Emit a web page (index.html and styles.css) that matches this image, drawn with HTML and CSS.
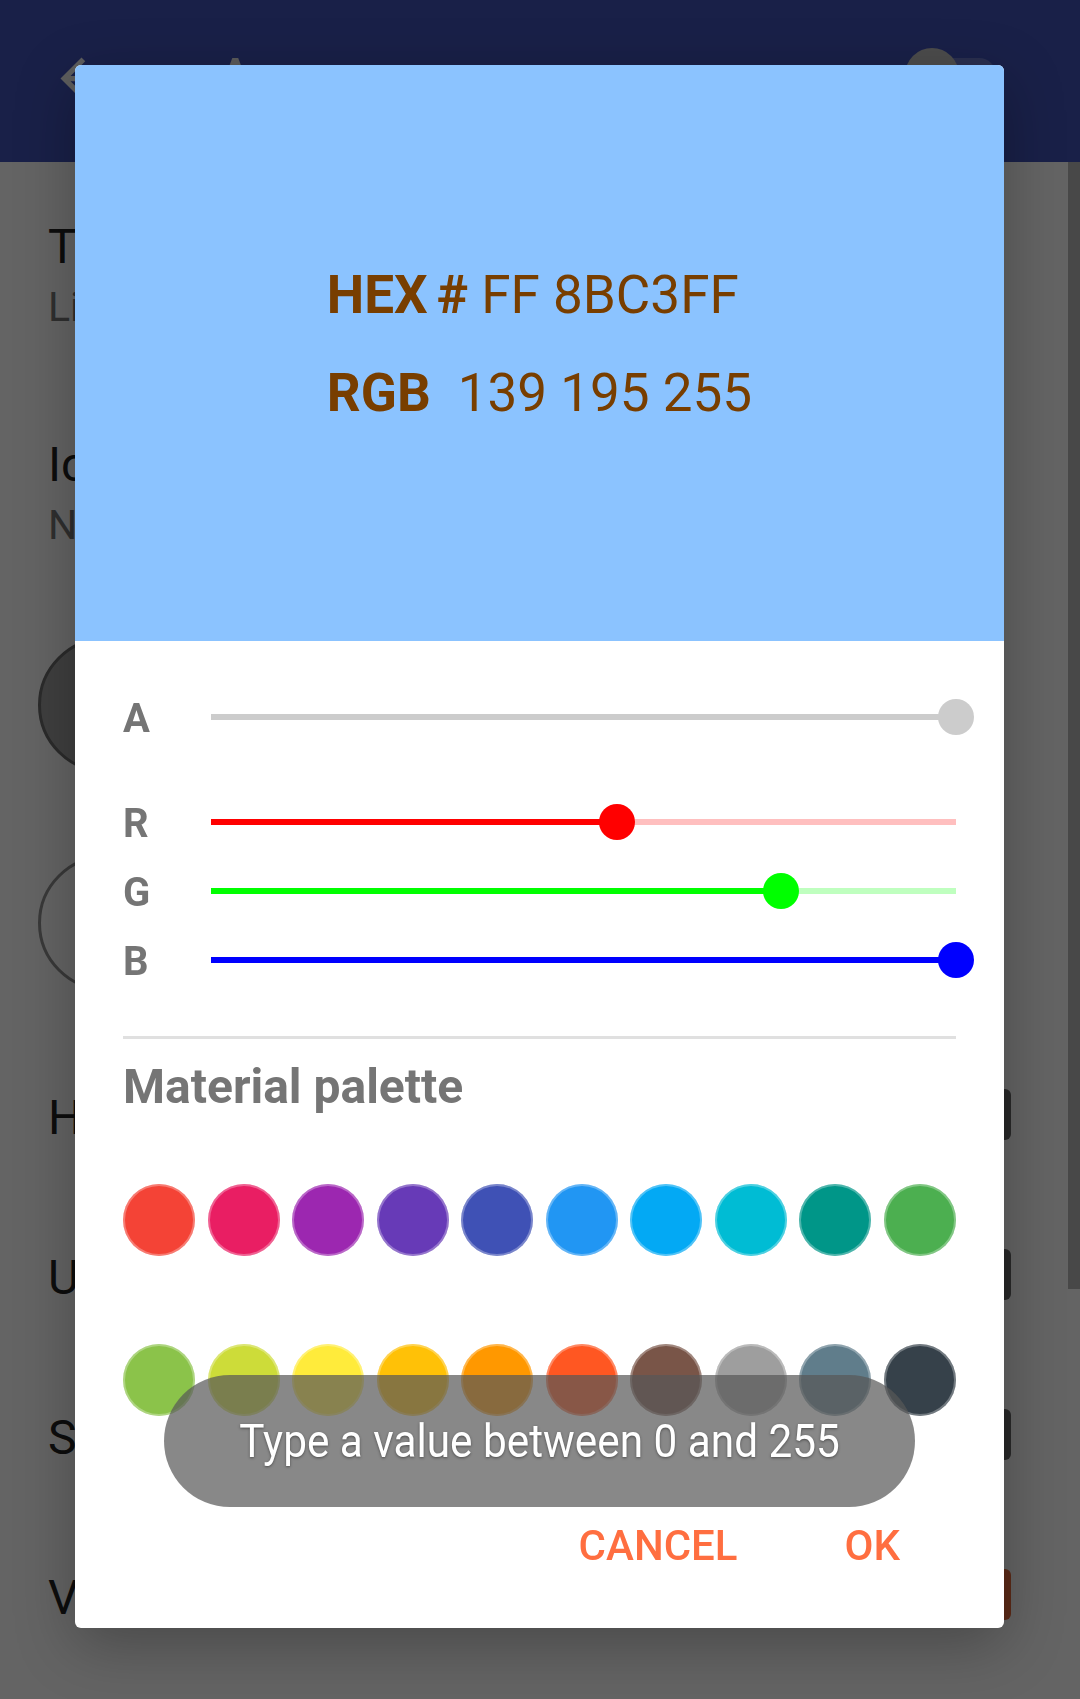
FILE: index.html
```html
<!DOCTYPE html>
<html lang="en">
<head>
<meta charset="utf-8">
<title>Color picker</title>
<link rel="stylesheet" href="styles.css">
</head>
<body>
  <div class="app">
    <header class="appbar">
      <svg class="back" viewBox="0 0 24 24" aria-hidden="true"><path d="M20 11H7.83l5.59-5.59L12 4l-8 8 8 8 1.41-1.41L7.83 13H20v-2z"/></svg>
      <div class="appbar-title">Appearance</div>
      <div class="switch"><span class="switch-track"></span><span class="switch-thumb"></span></div>
    </header>
    <main class="settings">
      <div class="item item-first"><div class="item-title">Theme</div><div class="item-sub">Light</div></div>
      <div class="item item-second"><div class="item-title">Icon</div><div class="item-sub">None</div></div>
      <div class="circle circle-filled"></div>
      <div class="circle circle-outline"></div>
      <div class="row row-first"><span class="item-title">Header</span><span class="btn-swatch"></span></div>
      <div class="row"><span class="item-title">Unread</span><span class="btn-swatch"></span></div>
      <div class="row"><span class="item-title">Selected</span><span class="btn-swatch"></span></div>
      <div class="row"><span class="item-title">Visited</span><span class="btn-swatch btn-swatch-accent"></span></div>
    </main>
    <div class="scroll-indicator"></div>
  </div>

  <div class="scrim"></div>

  <div class="dialog">
    <div class="preview">
      <div class="values">
        <div class="value-line"><b>HEX</b><b class="hash">#</b> FF 8BC3FF</div>
        <div class="value-line"><b>RGB</b><span class="rgb-val">139 195 255</span></div>
      </div>
    </div>

    <div class="sliders">
      <div class="slider slider-alpha">
        <span class="slider-label">A</span>
        <div class="track track-a"><span class="fill" style="width:100%"></span><span class="thumb" style="left:100%"></span></div>
      </div>
      <div class="slider">
        <span class="slider-label">R</span>
        <div class="track track-r"><span class="fill" style="width:54.5%"></span><span class="thumb" style="left:54.5%"></span></div>
      </div>
      <div class="slider">
        <span class="slider-label">G</span>
        <div class="track track-g"><span class="fill" style="width:76.5%"></span><span class="thumb" style="left:76.5%"></span></div>
      </div>
      <div class="slider">
        <span class="slider-label">B</span>
        <div class="track track-b"><span class="fill" style="width:100%"></span><span class="thumb" style="left:100%"></span></div>
      </div>
    </div>

    <div class="divider"></div>
    <div class="palette-title">Material palette</div>

    <div class="palette">
      <span class="dot" style="background:#F44336"></span>
      <span class="dot" style="background:#E91E63"></span>
      <span class="dot" style="background:#9C27B0"></span>
      <span class="dot" style="background:#673AB7"></span>
      <span class="dot" style="background:#3F51B5"></span>
      <span class="dot" style="background:#2196F3"></span>
      <span class="dot" style="background:#03A9F4"></span>
      <span class="dot" style="background:#00BCD4"></span>
      <span class="dot" style="background:#009688"></span>
      <span class="dot" style="background:#4CAF50"></span>
      <span class="dot" style="background:#8BC34A"></span>
      <span class="dot" style="background:#CDDC39"></span>
      <span class="dot" style="background:#FFEB3B"></span>
      <span class="dot" style="background:#FFC107"></span>
      <span class="dot" style="background:#FF9800"></span>
      <span class="dot" style="background:#FF5722"></span>
      <span class="dot" style="background:#795548"></span>
      <span class="dot" style="background:#9E9E9E"></span>
      <span class="dot" style="background:#607D8B"></span>
      <span class="dot" style="background:#36414A"></span>
    </div>

    <div class="actions">
      <span class="btn">CANCEL</span>
      <span class="btn">OK</span>
    </div>
  </div>

  <div class="toast"><span class="toast-text">Type a value between 0 and 255</span></div>
</body>
</html>
```
FILE: styles.css
```css
* { box-sizing: border-box; margin: 0; padding: 0; }

html, body { width: 1080px; height: 1699px; }

body {
  position: relative;
  overflow: hidden;
  background: #FAFAFA;
  font-family: Roboto, "Liberation Sans", sans-serif;
}

/* ---------- underlying settings screen ---------- */
.app { position: relative; height: 1699px; }

.appbar {
  height: 162px;
  background: #3F51B5;
  display: flex;
  align-items: flex-start;
  padding-top: 47px;
}
.back { width: 63px; height: 63px; margin-left: 50px; fill: #EAEAEA; flex: none; }
.appbar-title {
  margin-left: 105px;
  font-size: 52px;
  font-weight: 500;
  line-height: 62px;
  color: #E4E4E4;
}
.switch { position: relative; width: 91px; height: 54px; margin-left: auto; margin-right: 84px; margin-top: 1px; }
.switch-track {
  position: absolute; left: 3px; right: 0; top: 10px; height: 34px;
  border-radius: 17px; background: rgba(255,255,255,0.22);
}
.switch-thumb {
  position: absolute; left: 0; top: 0; width: 54px; height: 54px;
  border-radius: 50%; background: #BDBDBD;
}

.settings { display: flex; flex-direction: column; padding-left: 48px; }
.item-title { font-size: 48px; line-height: 56px; color: #212121; white-space: nowrap; }
.item-sub { font-size: 41px; line-height: 48px; color: #757575; margin-top: 8px; }
.item-first { margin-top: 57px; }
.item-second { margin-top: 106px; }

.circle { width: 136px; height: 136px; border-radius: 50%; margin-left: -10px; }
.circle-filled { margin-top: 88px; background: #9E9E9E; border: 3px solid #6B6B6B; }
.circle-outline { margin-top: 82px; border: 3px solid #8F8F8F; }

.row {
  display: flex; align-items: flex-start; justify-content: space-between;
  height: 56px; margin-top: 104px; padding-right: 69px;
}
.row-first { margin-top: 99px; }
.btn-swatch { width: 160px; height: 51px; margin-top: -1px; border-radius: 6px; background: #676767; }
.btn-swatch-accent { background: #E6693A; }

.scroll-indicator {
  position: absolute; right: 0; top: 162px; width: 12px; height: 1127px; background: #B4B4B4;
}

.scrim { position: fixed; inset: 0; background: rgba(0,0,0,0.6); }

/* ---------- dialog ---------- */
.dialog {
  position: absolute;
  left: 75px; top: 65px;
  width: 929px; height: 1563px;
  background: #FFFFFF;
  border-radius: 6px;
  overflow: hidden;
  box-shadow: 0 16px 60px rgba(0,0,0,0.28);
  display: flex; flex-direction: column;
}

.preview {
  height: 576px; flex: none;
  background: #8BC3FF;
  padding-top: 181px;
  display: flex; flex-direction: column; align-items: center;
  color: #783E00;
  font-size: 53px;
}
.values { display: flex; flex-direction: column; align-items: flex-start; }
.value-line { line-height: 98px; white-space: pre; }
.value-line b { font-weight: 700; }
.hash { margin-left: 9px; }
.rgb-val { margin-left: 27px; }

.sliders { padding: 41px 48px 0; }
.slider {
  display: grid;
  grid-template-columns: 88px 1fr;
  align-items: center;
  height: 69px;
}
.slider-alpha { margin-bottom: 36px; }
.slider-label {
  font-size: 40px; font-weight: 700; line-height: 40px;
  color: #757575; padding-top: 5px;
}
.track { position: relative; height: 6px; }
.fill { position: absolute; left: 0; top: 0; height: 6px; }
.thumb {
  position: absolute; top: 50%;
  width: 36px; height: 36px; border-radius: 50%;
  transform: translate(-50%, -50%);
}
.track-a { background: #CCCCCC; }
.track-a .fill, .track-a .thumb { background: #CCCCCC; }
.track-r { background: #FFBFBF; }
.track-r .fill, .track-r .thumb { background: #FF0000; }
.track-g { background: #BFFFBF; }
.track-g .fill, .track-g .thumb { background: #00FF00; }
.track-b { background: #BFBFFF; }
.track-b .fill, .track-b .thumb { background: #0000FF; }

.divider { height: 3px; background: #E0E0E0; margin: 42px 48px 0; flex: none; }

.palette-title {
  margin: 20px 48px 0;
  font-size: 48px; font-weight: 700; line-height: 56px;
  color: #757575;
}

.palette {
  margin: 69px 48px 0;
  display: grid;
  grid-template-columns: repeat(10, 72px);
  justify-content: space-between;
  row-gap: 88px;
}
.dot {
  width: 72px; height: 72px; border-radius: 50%;
  box-shadow: inset 0 0 0 2px rgba(255,255,255,0.3);
}

.actions {
  margin-top: 105px;
  display: flex; justify-content: flex-end;
  gap: 107px; padding-right: 104px;
}
.btn {
  font-size: 42px; font-weight: 500; line-height: 49px;
  color: #FF6E40;
}

/* ---------- toast ---------- */
.toast {
  position: absolute;
  left: 164px; top: 1375px;
  width: 751px; height: 132px;
  border-radius: 66px;
  background: rgba(87,87,87,0.71);
  display: flex; align-items: center; justify-content: center;
}
.toast-text {
  display: inline-block;
  color: #FFFFFF;
  font-size: 47px;
  line-height: 56px;
  text-shadow: 0 1px 3px rgba(0,0,0,0.45);
  white-space: nowrap;
  transform: scaleX(0.9);
}
```
